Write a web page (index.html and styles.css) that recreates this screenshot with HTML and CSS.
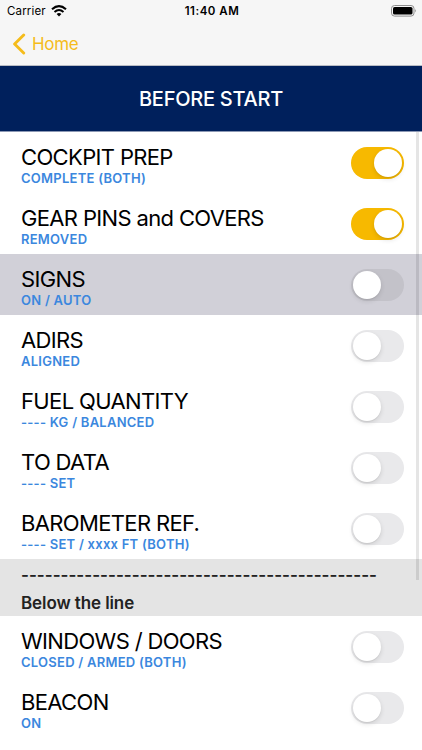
FILE: index.html
```html
<!DOCTYPE html>
<html lang="en">

<head>
  <meta charset="UTF-8">
  <meta name="viewport" content="width=device-width, initial-scale=1">
  <title>Before Start</title>
  <link rel="stylesheet" href="styles.css">
</head>

<body>
  <header class="top">
    <div class="status">
      <div class="carrier">
        <span>Carrier</span>
        <svg class="wifi" width="16" height="12" viewBox="0 0 16 12">
          <path d="M1 4.3 Q8 -1.9 15 4.3" fill="none" stroke="#000" stroke-width="2.1" />
          <path d="M3.5 6.9 Q8 3.1 12.5 6.9" fill="none" stroke="#000" stroke-width="2" />
          <path d="M5.6 9 Q8 7 10.4 9 L8 11.5 Z" />
        </svg>
      </div>
      <span class="time">11:40 AM</span>
      <svg class="battery" width="26" height="12" viewBox="0 0 26 12">
        <rect x="0.5" y="0.5" width="22.5" height="10.6" rx="3" fill="none" stroke="#8e8e8e" />
        <rect x="2" y="2" width="19.5" height="7.6" rx="1.6" />
        <path d="M24.2 4 Q26 5.8 24.2 7.6 Z" fill="#8e8e8e" />
      </svg>
    </div>
    <nav class="nav">
      <svg class="back" width="14" height="22" viewBox="0 0 14 22">
        <path d="M11.7 2 L2.6 11 L11.7 20" fill="none" stroke="#f5bc1b" stroke-width="2.9" stroke-linecap="round" stroke-linejoin="round" />
      </svg>
      <span class="home">Home</span>
    </nav>
  </header>

  <h1 class="banner">BEFORE START</h1>

  <main class="list">
    <div class="row">
      <div class="text">
        <p class="item">COCKPIT PREP</p>
        <p class="answer">COMPLETE (BOTH)</p>
      </div>
      <div class="switch on"></div>
    </div>
    <div class="row">
      <div class="text">
        <p class="item">GEAR PINS and COVERS</p>
        <p class="answer">REMOVED</p>
      </div>
      <div class="switch on"></div>
    </div>
    <div class="row selected">
      <div class="text">
        <p class="item">SIGNS</p>
        <p class="answer">ON / AUTO</p>
      </div>
      <div class="switch"></div>
    </div>
    <div class="row">
      <div class="text">
        <p class="item">ADIRS</p>
        <p class="answer">ALIGNED</p>
      </div>
      <div class="switch"></div>
    </div>
    <div class="row">
      <div class="text">
        <p class="item">FUEL QUANTITY</p>
        <p class="answer">---- KG / BALANCED</p>
      </div>
      <div class="switch"></div>
    </div>
    <div class="row">
      <div class="text">
        <p class="item">TO DATA</p>
        <p class="answer">---- SET</p>
      </div>
      <div class="switch"></div>
    </div>
    <div class="row">
      <div class="text">
        <p class="item">BAROMETER REF.</p>
        <p class="answer">---- SET / xxxx FT (BOTH)</p>
      </div>
      <div class="switch"></div>
    </div>

    <div class="section">
      <p class="dashes">---------------------------------------------</p>
      <p class="below">Below the line</p>
    </div>

    <div class="row">
      <div class="text">
        <p class="item">WINDOWS / DOORS</p>
        <p class="answer">CLOSED / ARMED (BOTH)</p>
      </div>
      <div class="switch"></div>
    </div>
    <div class="row">
      <div class="text">
        <p class="item">BEACON</p>
        <p class="answer">ON</p>
      </div>
      <div class="switch"></div>
    </div>
    <div class="scrollbar"></div>
  </main>
</body>

</html>
```
FILE: styles.css
```css
* {
  box-sizing: border-box;
}

body {
  margin: 0;
  height: 750px;
  overflow: hidden;
  background-color: #fff;
  color: #000;
  font-family: Inter, "Liberation Sans", sans-serif;
}

p {
  margin: 0;
}

svg {
  display: block;
}

.top {
  height: 66px;
  background-color: #f6f6f6;
  border-bottom: 1px solid #b9bcc4;
}

.status {
  display: grid;
  grid-template-columns: 1fr auto 1fr;
  align-items: center;
  height: 22px;
  padding: 0 5px 0 7px;
  font-size: 11.5px;
}

.carrier {
  display: flex;
  align-items: center;
  gap: 5px;
  letter-spacing: 0.15px;
}

.time {
  font-weight: 600;
  letter-spacing: 0.5px;
}

.battery {
  justify-self: end;
}

.nav {
  display: flex;
  align-items: center;
  gap: 6px;
  height: 43px;
  padding-left: 12px;
  color: #f5bc1b;
  font-size: 17px;
  letter-spacing: -0.35px;
}

.banner {
  display: flex;
  align-items: center;
  justify-content: center;
  height: 66px;
  margin: 0;
  background-color: #00205c;
  border-bottom: 1px solid #8c98b4;
  color: #fff;
  font-size: 20px;
  font-weight: 500;
  letter-spacing: -0.25px;
}

.list {
  position: relative;
}

.row {
  display: flex;
  align-items: center;
  justify-content: space-between;
  height: 61px;
  padding: 1px 18px 0 21px;
}

.selected {
  background-color: #d1d0d8;
}

.text {
  padding-top: 5px;
}

.item {
  font-size: 22px;
  line-height: 25px;
  letter-spacing: -0.65px;
}

.answer {
  color: #3b87de;
  font-size: 13px;
  font-weight: 600;
  line-height: 17px;
  letter-spacing: 0.25px;
}

.switch {
  width: 53px;
  height: 32px;
  padding: 2px;
  border-radius: 16px;
  background-color: #e9e9eb;
}

.switch::before {
  content: "";
  display: block;
  width: 28px;
  height: 28px;
  border-radius: 50%;
  background-color: #fff;
  box-shadow: 0 2px 5px rgba(0, 0, 0, 0.12), 0 1px 1px rgba(0, 0, 0, 0.06);
}

.on {
  background-color: #f7b900;
}

.on::before {
  margin-left: 21px;
}

.selected .switch {
  background-color: #c3c2c9;
}

.section {
  height: 57px;
  padding: 3px 0 0 21px;
  background-color: #e4e4e4;
  color: #222;
  font-size: 17px;
  font-weight: 600;
  line-height: 26px;
}

.dashes {
  white-space: nowrap;
}

.below {
  margin-top: 2px;
  letter-spacing: -0.1px;
}

.scrollbar {
  position: absolute;
  top: 0;
  right: 3px;
  width: 3px;
  height: 448px;
  background-color: rgba(0, 0, 0, 0.1);
}
```
